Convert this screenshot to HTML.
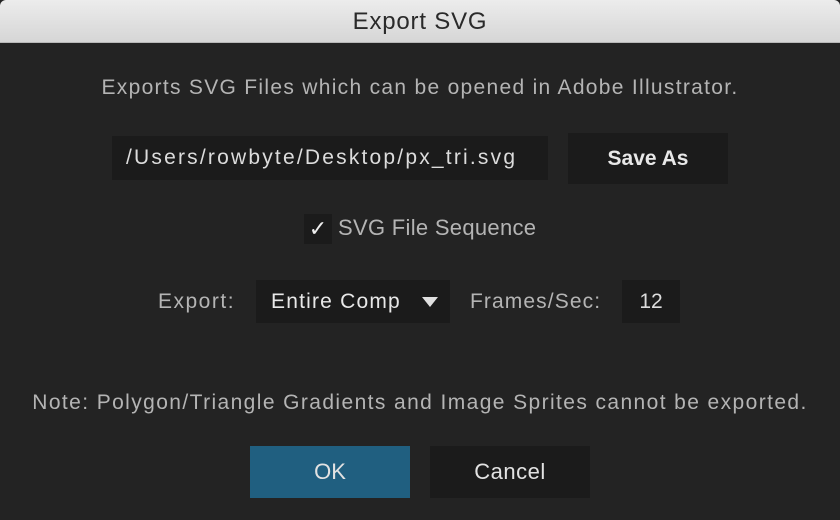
<!DOCTYPE html>
<html><head><meta charset="utf-8"><style>
*{margin:0;padding:0;box-sizing:border-box}
body{width:840px;height:520px;background:#232323;font-family:"Liberation Sans",sans-serif;position:relative;overflow:hidden}
.tb{position:absolute;left:0;top:0;width:840px;height:43px;background:linear-gradient(#ececec,#d6d6d6);border-radius:6px 6px 0 0;border-bottom:1px solid #b8b8b8;text-align:center;line-height:43px;font-size:24px;letter-spacing:0.8px;color:#2a2a2a}
.a{position:absolute;white-space:nowrap}
.t{color:#b4b4b4;font-size:21px}
.f{background:#1b1b1b;color:#dcdcdc;font-size:21px}
</style></head><body>
<div class="tb">Export SVG</div>
<div class="a t" style="left:0;width:840px;text-align:center;top:76px;letter-spacing:1.3px">Exports SVG Files which can be opened in Adobe Illustrator.</div>
<div class="a f" style="left:112px;top:136px;width:436px;height:44px;line-height:44px;padding-left:14px;letter-spacing:2.2px">/Users/rowbyte/Desktop/px_tri.svg</div>
<div class="a f" style="left:568px;top:133px;width:160px;height:51px;line-height:51px;text-align:center;font-weight:bold;color:#e8e8e8;font-size:21px">Save As</div>
<div class="a" style="left:304px;top:214px;width:28px;height:30px;background:#1b1b1b;color:#eee;font-size:22px;text-align:center;line-height:30px">✓</div>
<div class="a t" style="left:338px;top:215px;font-size:22px;letter-spacing:0.3px">SVG File Sequence</div>
<div class="a t" style="left:158px;top:290px;letter-spacing:1.5px">Export:</div>
<div class="a f" style="left:256px;top:280px;width:194px;height:43px;line-height:43px;padding-left:15px;color:#e8e8e8;letter-spacing:1.2px">Entire Comp
<svg style="position:absolute;left:166px;top:17px" width="16" height="10"><path d="M0 0H16L8 10Z" fill="#e0e0e0"/></svg></div>
<div class="a t" style="left:470px;top:290px;letter-spacing:1.1px">Frames/Sec:</div>
<div class="a f" style="left:622px;top:280px;width:58px;height:43px;line-height:43px;text-align:center">12</div>
<div class="a t" style="left:0;width:840px;text-align:center;top:391px;letter-spacing:1.4px">Note: Polygon/Triangle Gradients and Image Sprites cannot be exported.</div>
<div class="a" style="left:250px;top:446px;width:160px;height:52px;background:#205f80;color:#e2e2e2;font-size:22px;text-align:center;line-height:52px">OK</div>
<div class="a f" style="left:430px;top:446px;width:160px;height:52px;line-height:52px;text-align:center;font-size:22px;color:#e2e2e2;letter-spacing:0.5px">Cancel</div>
</body></html>
